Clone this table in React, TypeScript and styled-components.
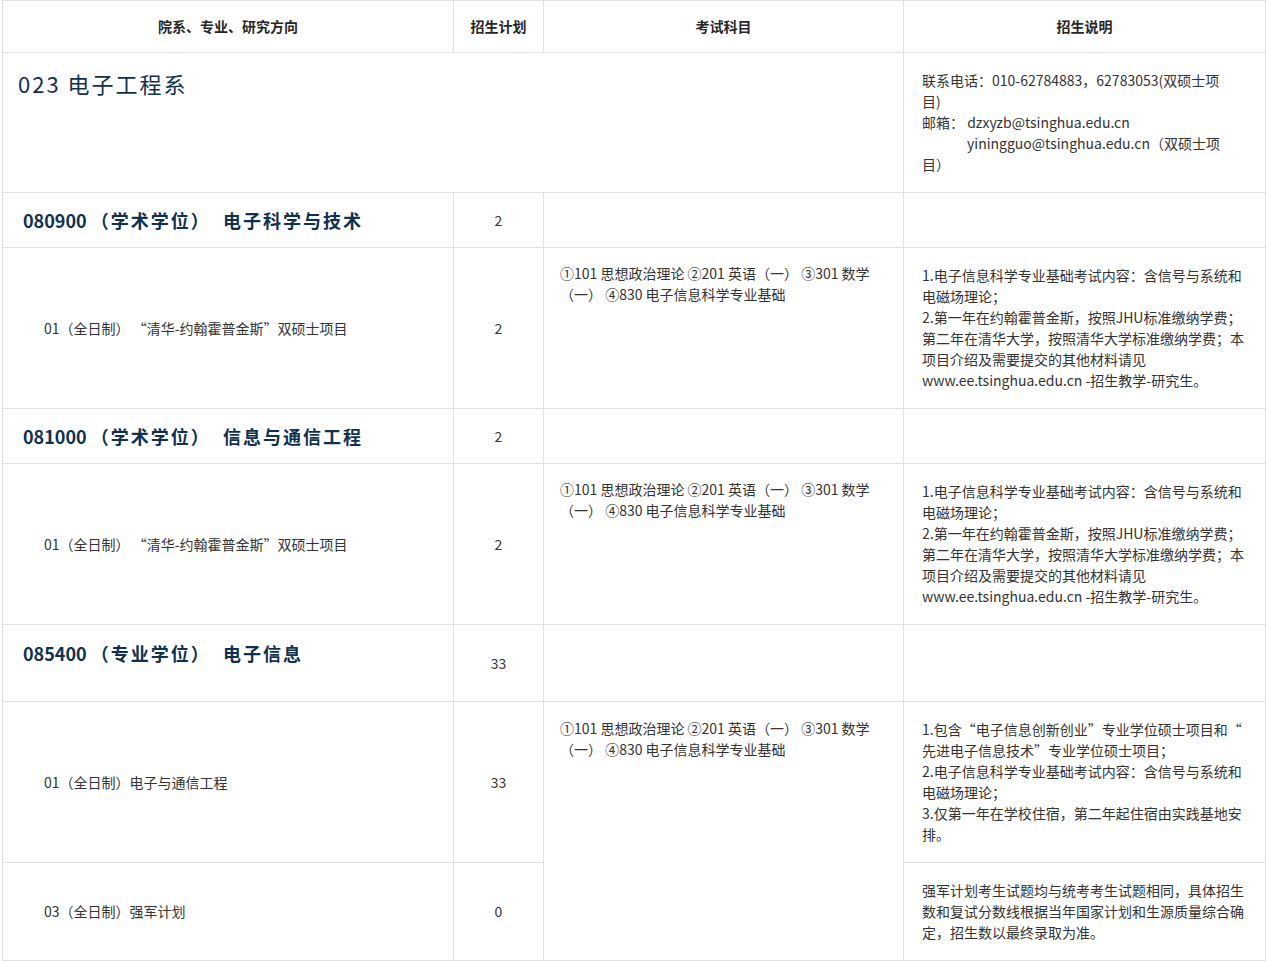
import React from "react";
import styled, { createGlobalStyle } from "styled-components";

const GlobalStyle = createGlobalStyle`
  html, body { margin: 0; padding: 0; background: #ffffff; }
  body {
    font-family: "Noto Sans CJK SC", "Noto Sans", "Liberation Sans", sans-serif;
    color: #333333;
  }
`;

const Page = styled.div`
  padding: 0 0 0 2px;
`;

const Table = styled.table`
  width: 1263px;
  border-collapse: collapse;
  table-layout: fixed;
  font-size: 14px;
  line-height: 21px;
  color: #333333;
`;

const Row = styled.tr<{ $h: number }>`
  height: ${(p) => p.$h}px;
`;

const HeadCell = styled.th`
  border: 1px solid #dfe3e8;
  padding: 0;
  font-size: 14px;
  font-weight: 700;
  color: #262626;
  text-align: center;
  vertical-align: middle;
`;

const Cell = styled.td<{
  $align?: "left" | "center";
  $valign?: "top" | "middle";
  $pl?: number;
  $pt?: number;
}>`
  border: 1px solid #dfe3e8;
  padding: ${(p) => p.$pt ?? 0}px 12px 0 ${(p) => p.$pl ?? 18}px;
  text-align: ${(p) => p.$align ?? "left"};
  vertical-align: ${(p) => p.$valign ?? "middle"};
`;

const NumCell = styled.td`
  border: 1px solid #dfe3e8;
  padding: 0;
  text-align: center;
  vertical-align: middle;
`;

const DeptTitle = styled.div`
  font-size: 22px;
  line-height: 30px;
  letter-spacing: 2px;
  color: #14304f;
`;

const MajorTitle = styled.div`
  font-size: 18px;
  line-height: 28px;
  font-weight: 700;
  color: #10304f;
  white-space: pre;
`;

const MajorName = styled.span`
  letter-spacing: 2px;
`;

const Line = styled.span<{ $indent?: number }>`
  display: block;
  white-space: nowrap;
  padding-left: ${(p) => p.$indent ?? 0}px;
`;

const exam = [
  "①101 思想政治理论 ②201 英语（一） ③301 数学",
  "（一） ④830 电子信息科学专业基础",
];

const jhuNotes = [
  "1.电子信息科学专业基础考试内容：含信号与系统和",
  "电磁场理论；",
  "2.第一年在约翰霍普金斯，按照JHU标准缴纳学费；",
  "第二年在清华大学，按照清华大学标准缴纳学费；本",
  "项目介绍及需要提交的其他材料请见",
  "www.ee.tsinghua.edu.cn -招生教学-研究生。",
];

const proNotes = [
  "1.包含“电子信息创新创业”专业学位硕士项目和“",
  "先进电子信息技术”专业学位硕士项目；",
  "2.电子信息科学专业基础考试内容：含信号与系统和",
  "电磁场理论；",
  "3.仅第一年在学校住宿，第二年起住宿由实践基地安",
  "排。",
];

const armyNotes = [
  "强军计划考生试题均与统考考生试题相同，具体招生",
  "数和复试分数线根据当年国家计划和生源质量综合确",
  "定，招生数以最终录取为准。",
];

const Lines: React.FC<{ lines: string[] }> = ({ lines }) => (
  <>
    {lines.map((l, i) => (
      <Line key={i}>{l}</Line>
    ))}
  </>
);

const Major: React.FC<{ code: string; kind: string; name: string }> = ({ code, kind, name }) => (
  <MajorTitle>
    {code} <MajorName>{kind}  {name}</MajorName>
  </MajorTitle>
);

export default function App() {
  return (
    <>
      <GlobalStyle />
      <Page>
        <Table>
          <colgroup>
            <col style={{ width: 451 }} />
            <col style={{ width: 90 }} />
            <col style={{ width: 360 }} />
            <col style={{ width: 362 }} />
          </colgroup>
          <thead>
            <Row $h={52}>
              <HeadCell>院系、专业、研究方向</HeadCell>
              <HeadCell>招生计划</HeadCell>
              <HeadCell>考试科目</HeadCell>
              <HeadCell>招生说明</HeadCell>
            </Row>
          </thead>
          <tbody>
            <Row $h={140}>
              <Cell colSpan={3} $valign="top" $pl={15} $pt={15}>
                <DeptTitle>023 电子工程系</DeptTitle>
              </Cell>
              <Cell $pl={18}>
                <Line>联系电话：010-62784883，62783053(双硕士项</Line>
                <Line>目)</Line>
                <Line>邮箱： dzxyzb@tsinghua.edu.cn</Line>
                <Line $indent={45}>yiningguo@tsinghua.edu.cn（双硕士项</Line>
                <Line>目）</Line>
              </Cell>
            </Row>

            <Row $h={55}>
              <Cell $pl={20}>
                <Major code="080900" kind="（学术学位）" name="电子科学与技术" />
              </Cell>
              <NumCell>2</NumCell>
              <Cell />
              <Cell />
            </Row>
            <Row $h={161}>
              <Cell $pl={41}>01（全日制） “清华-约翰霍普金斯”双硕士项目</Cell>
              <NumCell>2</NumCell>
              <Cell $valign="top" $pl={16} $pt={15}>
                <Lines lines={exam} />
              </Cell>
              <Cell $pl={18}>
                <Lines lines={jhuNotes} />
              </Cell>
            </Row>

            <Row $h={55}>
              <Cell $pl={20}>
                <Major code="081000" kind="（学术学位）" name="信息与通信工程" />
              </Cell>
              <NumCell>2</NumCell>
              <Cell />
              <Cell />
            </Row>
            <Row $h={161}>
              <Cell $pl={41}>01（全日制） “清华-约翰霍普金斯”双硕士项目</Cell>
              <NumCell>2</NumCell>
              <Cell $valign="top" $pl={16} $pt={15}>
                <Lines lines={exam} />
              </Cell>
              <Cell $pl={18}>
                <Lines lines={jhuNotes} />
              </Cell>
            </Row>

            <Row $h={77}>
              <Cell $valign="top" $pl={20} $pt={14}>
                <Major code="085400" kind="（专业学位）" name="电子信息" />
              </Cell>
              <NumCell>33</NumCell>
              <Cell />
              <Cell />
            </Row>
            <Row $h={161}>
              <Cell $pl={41}>01（全日制）电子与通信工程</Cell>
              <NumCell>33</NumCell>
              <Cell rowSpan={2} $valign="top" $pl={16} $pt={16}>
                <Lines lines={exam} />
              </Cell>
              <Cell $pl={18}>
                <Lines lines={proNotes} />
              </Cell>
            </Row>
            <Row $h={98}>
              <Cell $pl={41}>03（全日制）强军计划</Cell>
              <NumCell>0</NumCell>
              <Cell $pl={18}>
                <Lines lines={armyNotes} />
              </Cell>
            </Row>
          </tbody>
        </Table>
      </Page>
    </>
  );
}
